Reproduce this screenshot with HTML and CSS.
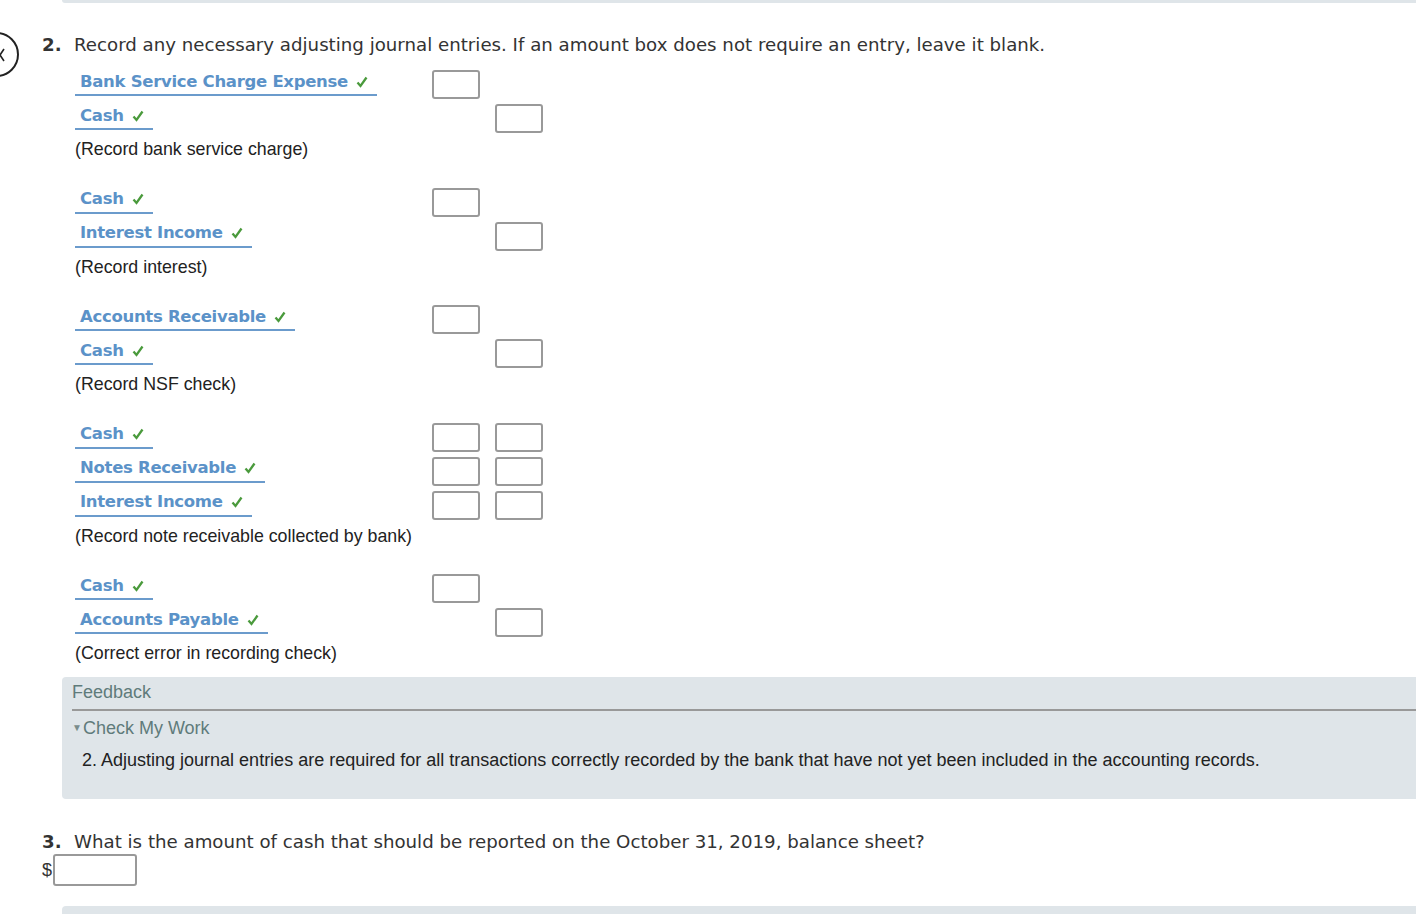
FILE: index.html
```html
<!DOCTYPE html>
<html>
<head>
<meta charset="utf-8">
<link rel="stylesheet" href="styles.css">
</head>
<body>
<div class="strip-top"></div>
<div class="nav-circle"><svg class="nav-chev" width="8" height="14" viewBox="0 0 8 14"><path d="M6 1 L2 7 L6 13" fill="none" stroke="#222" stroke-width="1.6"/></svg></div>

<section class="question">
  <p class="q-head"><b class="q-num">2.</b>Record any necessary adjusting journal entries. If an amount box does not require an entry, leave it blank.</p>

  <div class="journal">
    <div class="entry">
      <div class="acct"><span class="lbl">Bank Service Charge Expense<svg class="chk" width="12" height="12" viewBox="0 0 12 12"><path d="M1.5 6.5 L4.5 10 L10.5 1.5" fill="none" stroke="#4a9a3c" stroke-width="2.3"/></svg></span></div>
      <div class="dr"><span class="box"></span></div><div class="cr"></div>
      <div class="acct"><span class="lbl">Cash<svg class="chk" width="12" height="12" viewBox="0 0 12 12"><path d="M1.5 6.5 L4.5 10 L10.5 1.5" fill="none" stroke="#4a9a3c" stroke-width="2.3"/></svg></span></div>
      <div class="dr"></div><div class="cr"><span class="box"></span></div>
      <div class="note">(Record bank service charge)</div>
    </div>

    <div class="entry">
      <div class="acct"><span class="lbl">Cash<svg class="chk" width="12" height="12" viewBox="0 0 12 12"><path d="M1.5 6.5 L4.5 10 L10.5 1.5" fill="none" stroke="#4a9a3c" stroke-width="2.3"/></svg></span></div>
      <div class="dr"><span class="box"></span></div><div class="cr"></div>
      <div class="acct"><span class="lbl">Interest Income<svg class="chk" width="12" height="12" viewBox="0 0 12 12"><path d="M1.5 6.5 L4.5 10 L10.5 1.5" fill="none" stroke="#4a9a3c" stroke-width="2.3"/></svg></span></div>
      <div class="dr"></div><div class="cr"><span class="box"></span></div>
      <div class="note">(Record interest)</div>
    </div>

    <div class="entry">
      <div class="acct"><span class="lbl">Accounts Receivable<svg class="chk" width="12" height="12" viewBox="0 0 12 12"><path d="M1.5 6.5 L4.5 10 L10.5 1.5" fill="none" stroke="#4a9a3c" stroke-width="2.3"/></svg></span></div>
      <div class="dr"><span class="box"></span></div><div class="cr"></div>
      <div class="acct"><span class="lbl">Cash<svg class="chk" width="12" height="12" viewBox="0 0 12 12"><path d="M1.5 6.5 L4.5 10 L10.5 1.5" fill="none" stroke="#4a9a3c" stroke-width="2.3"/></svg></span></div>
      <div class="dr"></div><div class="cr"><span class="box"></span></div>
      <div class="note">(Record NSF check)</div>
    </div>

    <div class="entry">
      <div class="acct"><span class="lbl">Cash<svg class="chk" width="12" height="12" viewBox="0 0 12 12"><path d="M1.5 6.5 L4.5 10 L10.5 1.5" fill="none" stroke="#4a9a3c" stroke-width="2.3"/></svg></span></div>
      <div class="dr"><span class="box"></span></div><div class="cr"><span class="box"></span></div>
      <div class="acct"><span class="lbl">Notes Receivable<svg class="chk" width="12" height="12" viewBox="0 0 12 12"><path d="M1.5 6.5 L4.5 10 L10.5 1.5" fill="none" stroke="#4a9a3c" stroke-width="2.3"/></svg></span></div>
      <div class="dr"><span class="box"></span></div><div class="cr"><span class="box"></span></div>
      <div class="acct"><span class="lbl">Interest Income<svg class="chk" width="12" height="12" viewBox="0 0 12 12"><path d="M1.5 6.5 L4.5 10 L10.5 1.5" fill="none" stroke="#4a9a3c" stroke-width="2.3"/></svg></span></div>
      <div class="dr"><span class="box"></span></div><div class="cr"><span class="box"></span></div>
      <div class="note">(Record note receivable collected by bank)</div>
    </div>

    <div class="entry">
      <div class="acct"><span class="lbl">Cash<svg class="chk" width="12" height="12" viewBox="0 0 12 12"><path d="M1.5 6.5 L4.5 10 L10.5 1.5" fill="none" stroke="#4a9a3c" stroke-width="2.3"/></svg></span></div>
      <div class="dr"><span class="box"></span></div><div class="cr"></div>
      <div class="acct"><span class="lbl">Accounts Payable<svg class="chk" width="12" height="12" viewBox="0 0 12 12"><path d="M1.5 6.5 L4.5 10 L10.5 1.5" fill="none" stroke="#4a9a3c" stroke-width="2.3"/></svg></span></div>
      <div class="dr"></div><div class="cr"><span class="box"></span></div>
      <div class="note">(Correct error in recording check)</div>
    </div>
  </div>
</section>

<div class="feedback">
  <div class="fb-title">Feedback</div>
  <div class="fb-rule"></div>
  <div class="fb-toggle"><span class="tri">▼</span>Check My Work</div>
  <div class="fb-text">2. Adjusting journal entries are required for all transactions correctly recorded by the bank that have not yet been included in the accounting records.</div>
</div>

<section class="question q3">
  <p class="q-head"><b class="q-num">3.</b>What is the amount of cash that should be reported on the October 31, 2019, balance sheet?</p>
  <div class="amount"><span class="dollar">$</span><span class="box wide"></span></div>
</section>

<div class="strip-bottom"></div>
</body>
</html>
```

FILE: styles.css
```css
html, body {
  margin: 0;
  padding: 0;
  background: #fff;
  overflow: hidden;
}
body {
  position: relative;
  width: 1416px;
  height: 914px;
  font-family: "DejaVu Sans", Verdana, sans-serif;
  color: #333;
}
.strip-top {
  height: 3px;
  margin-left: 62px;
  background: #dfe5e9;
  border-bottom-left-radius: 3px;
}
.nav-circle {
  position: absolute;
  left: -26px;
  top: 32px;
  width: 41px;
  height: 41px;
  border: 2px solid #222;
  border-radius: 50%;
}
.nav-chev {
  position: absolute;
  left: 22px;
  top: 14px;
}
.question {
  padding-left: 42px;
}
.q-head {
  margin: 31px 0 0 0;
  font-size: 18.2px;
  line-height: 22px;
  color: #333;
  white-space: nowrap;
}
.q-num {
  display: inline-block;
  width: 32px;
  font-weight: bold;
}
.journal {
  margin-top: 8px;
  padding-left: 33px;
}
.entry {
  display: grid;
  grid-template-columns: 357px 48px 15px 48px;
  grid-auto-rows: 34px;
  margin-bottom: 15.5px;
}
.entry .cr { grid-column: 4; }
.entry .dr { grid-column: 2; }
.acct { grid-column: 1; }
.lbl {
  display: inline-flex;
  align-items: center;
  box-sizing: border-box;
  height: 32px;
  padding: 4px 9px 0 5px;
  border-bottom: 2px solid #6b9bcc;
  font-weight: bold;
  font-size: 16.5px;
  letter-spacing: -0.3px;
  color: #5b92c8;
  white-space: nowrap;
}
.chk {
  margin-left: 8px;
  margin-top: 1px;
}
.box {
  display: block;
  box-sizing: border-box;
  width: 48px;
  height: 29px;
  margin-top: 6px;
  border: 2px solid #999;
  border-radius: 3px;
  background: #fff;
}
.note {
  grid-column: 1 / span 4;
  font-family: "Liberation Sans", Arial, sans-serif;
  font-size: 17.8px;
  line-height: 34px;
  color: #222;
  white-space: nowrap;
}
.feedback {
  margin-left: 62px;
  margin-top: -8.5px;
  height: 122px;
  box-sizing: border-box;
  padding: 4px 0 0 10px;
  background: #dfe5e9;
  border-radius: 4px 0 0 4px;
  font-family: "Liberation Sans", Arial, sans-serif;
}
.fb-title {
  font-size: 18px;
  line-height: 22px;
  color: #5f7b7b;
}
.fb-rule {
  height: 2px;
  margin-top: 6px;
  background: #999;
}
.fb-toggle {
  margin-top: 6px;
  font-size: 18px;
  line-height: 22px;
  color: #5f7b7b;
}
.tri {
  display: inline-block;
  font-size: 10px;
  vertical-align: 3px;
  margin-right: 1px;
  color: #7a8c8c;
}
.fb-text {
  margin-top: 10px;
  padding-left: 10px;
  font-size: 18px;
  line-height: 22px;
  color: #222;
  white-space: nowrap;
}
.q3 .q-head {
  margin-top: 32px;
}
.amount {
  display: flex;
  align-items: center;
  margin-top: 1px;
}
.dollar {
  font-family: "Liberation Sans", Arial, sans-serif;
  font-size: 18px;
  color: #333;
}
.box.wide {
  width: 84px;
  height: 32px;
  margin-top: 0;
  margin-left: 1px;
}
.strip-bottom {
  position: absolute;
  left: 62px;
  right: 0;
  top: 906px;
  height: 10px;
  background: #dfe5e9;
  border-top-left-radius: 4px;
}
```
